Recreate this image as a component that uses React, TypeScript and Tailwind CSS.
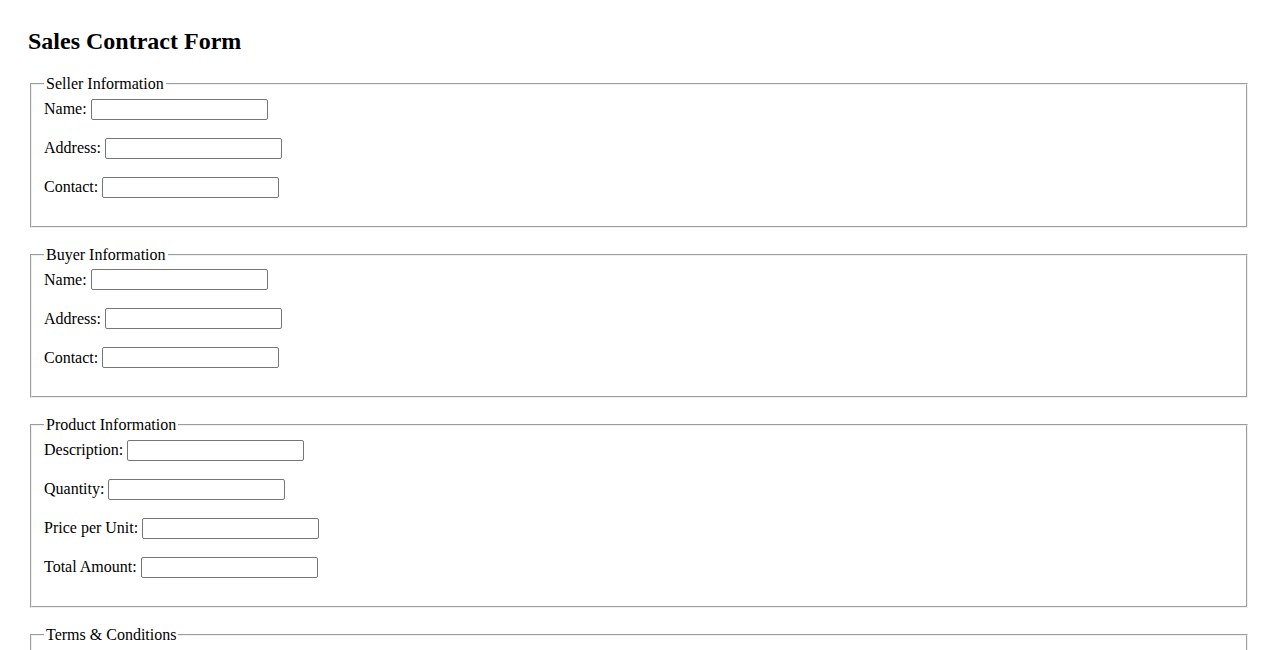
import type { ReactNode } from "react";

type Field = { label: string };

const sections: { legend: string; fields: Field[] }[] = [
  {
    legend: "Seller Information",
    fields: [{ label: "Name:" }, { label: "Address:" }, { label: "Contact:" }],
  },
  {
    legend: "Buyer Information",
    fields: [{ label: "Name:" }, { label: "Address:" }, { label: "Contact:" }],
  },
  {
    legend: "Product Information",
    fields: [
      { label: "Description:" },
      { label: "Quantity:" },
      { label: "Price per Unit:" },
      { label: "Total Amount:" },
    ],
  },
];

const Section = ({ legend, children }: { legend: string; children: ReactNode }) => (
  <fieldset className="mx-[2px] mb-[18px] border-2 border-[#f0f0f0] [border-style:groove] px-[12px] pt-[5.6px] pb-[10px]">
    <legend className="px-[2px] text-[16px] leading-[normal]">{legend}</legend>
    {children}
  </fieldset>
);

const Row = ({ label }: Field) => (
  <div className="mb-[18px] flex h-[21px] items-center">
    <label className="mr-[4px] text-[16px] leading-[normal]">{label}</label>
    <input
      type="text"
      className="h-[21px] w-[177px] rounded-[2px] border border-[#767676] bg-white px-[2px] py-[1px] text-[13.33px] outline-none"
    />
  </div>
);

export default function App() {
  return (
    <div className="bg-white px-[28px] pt-[28px] pb-[20px] font-['Liberation_Serif','Times_New_Roman',serif] text-black">
      <h2 className="mb-[19.92px] text-[24px] leading-[normal] font-bold">
        Sales Contract Form
      </h2>
      <form>
        {sections.map((s) => (
          <Section key={s.legend} legend={s.legend}>
            {s.fields.map((f) => (
              <Row key={f.label} label={f.label} />
            ))}
          </Section>
        ))}
        <Section legend="Terms & Conditions">
          <div className="mb-[18px]">
            <label className="block text-[16px] leading-[normal]">Terms:</label>
            <textarea
              rows={4}
              cols={50}
              className="rounded-[2px] border border-[#767676] bg-white px-[2px] py-[1px] text-[13.33px] outline-none"
            />
          </div>
        </Section>
      </form>
    </div>
  );
}
